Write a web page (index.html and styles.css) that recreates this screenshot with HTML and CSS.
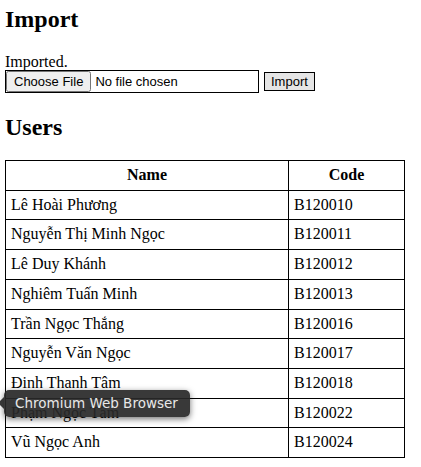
FILE: index.html
```html
<!DOCTYPE html>
<html>
<head>
<meta charset="utf-8">
<link rel="stylesheet" href="styles.css">
</head>
<body>
<h2 class="title">Import</h2>
<div class="msg">Imported.</div>
<form class="upload">
  <input class="file" type="file">
  <button class="btn" type="button">Import</button>
</form>
<h2 class="title users">Users</h2>
<table class="grid">
  <thead>
    <tr><th class="c-name">Name</th><th class="c-code">Code</th></tr>
  </thead>
  <tbody>
    <tr><td>Lê Hoài Phương</td><td>B120010</td></tr>
    <tr><td>Nguyễn Thị Minh Ngọc</td><td>B120011</td></tr>
    <tr><td>Lê Duy Khánh</td><td>B120012</td></tr>
    <tr><td>Nghiêm Tuấn Minh</td><td>B120013</td></tr>
    <tr><td>Trần Ngọc Thắng</td><td>B120016</td></tr>
    <tr><td>Nguyễn Văn Ngọc</td><td>B120017</td></tr>
    <tr><td>Đinh Thanh Tâm</td><td>B120018</td></tr>
    <tr><td>Phạm Ngọc Tâm</td><td>B120022</td></tr>
    <tr><td>Vũ Ngọc Anh</td><td>B120024</td></tr>
  </tbody>
</table>
<div class="tooltip">Chromium Web Browser</div>
</body>
</html>
```
FILE: styles.css
```css
html, body { margin: 0; padding: 0; }
body {
  margin: 5px;
  font-family: "Liberation Serif", "DejaVu Serif", serif;
  font-size: 16px;
  color: #000;
  background: #fff;
}
.title {
  font-size: 24px;
  font-weight: bold;
  margin: 0 0 20px 0;
  line-height: 28px;
}
.msg { line-height: 17px; }
.upload {
  display: flex;
  align-items: center;
  gap: 5px;
  margin: 0 0 20px 0;
}
.file {
  width: 254px;
  height: 23px;
  box-sizing: border-box;
  border: 1px solid #000;
  font-family: "Liberation Sans", Arial, sans-serif;
  font-size: 13px;
  padding: 0;
  background: #fff;
}
.btn {
  font-family: "Liberation Sans", Arial, sans-serif;
  font-size: 13px;
  height: 19px;
  padding: 0 6px;
  border: 1px solid #000;
  background: #e5e5e5;
  line-height: 15px;
}
.users { margin-bottom: 19px; }
.grid {
  border-collapse: collapse;
  width: 400px;
}
.grid th, .grid td {
  border: 1px solid #000;
  padding: 5px 5px;
  text-align: left;
  line-height: 18.7px;
}
.grid th { text-align: center; font-weight: bold; }
.c-name { width: 272px; }
.tooltip {
  position: absolute;
  left: 4px;
  top: 390px;
  padding: 4px 12px 5px 11px;
  background: rgba(40, 40, 40, 0.92);
  color: #e8e8e8;
  border-radius: 5px;
  font-family: "DejaVu Sans", "Noto Sans", sans-serif;
  font-size: 13.5px;
  line-height: 18px;
  box-shadow: 0 2px 6px rgba(0,0,0,0.55);
}
.tooltip::before {
  content: "";
  position: absolute;
  left: -6px;
  top: 7px;
  border-style: solid;
  border-width: 6px 6px 6px 0;
  border-color: transparent rgba(40,40,40,0.92) transparent transparent;
}
```
